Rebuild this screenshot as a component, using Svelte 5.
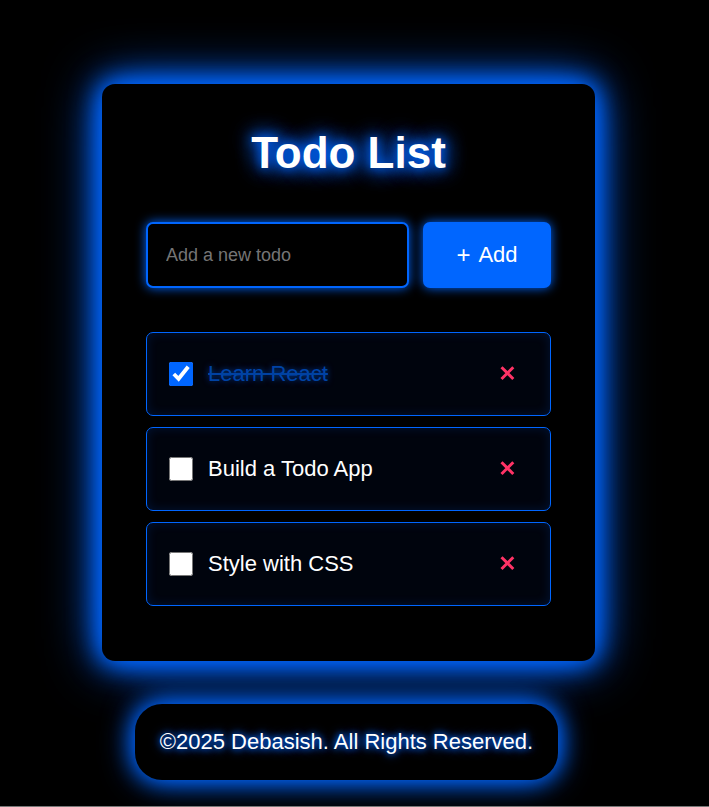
<script>
  let todos = $state([
    { id: 1, text: 'Learn React', done: true },
    { id: 2, text: 'Build a Todo App', done: false },
    { id: 3, text: 'Style with CSS', done: false }
  ]);
  let draft = $state('');

  function add(event) {
    event.preventDefault();
    const text = draft.trim();
    if (!text) return;
    todos.push({ id: Date.now(), text, done: false });
    draft = '';
  }

  function remove(id) {
    todos = todos.filter((todo) => todo.id !== id);
  }
</script>

<div class="page">
  <main class="card">
    <h1>Todo List</h1>
    <form onsubmit={add}>
      <input class="draft" type="text" placeholder="Add a new todo" aria-label="Add a new todo" bind:value={draft} />
      <button class="add" type="submit"><span class="plus">+</span> <span>Add</span></button>
    </form>
    <ul>
      {#each todos as todo (todo.id)}
        <li>
          <label>
            <input class="tick" type="checkbox" bind:checked={todo.done} />
            <span class:done={todo.done}>{todo.text}</span>
          </label>
          <button class="remove" type="button" aria-label="Delete {todo.text}" onclick={() => remove(todo.id)}>
            <svg viewBox="0 0 16 16" width="16" height="16" aria-hidden="true">
              <path d="M1.5 1.2 L13.3 13 M13.3 1.2 L1.5 13" />
            </svg>
          </button>
        </li>
      {/each}
    </ul>
  </main>
  <footer>©2025 Debasish. All Rights Reserved.</footer>
</div>

<style>
  :global(body) {
    margin: 0;
    background: #000;
  }

  .page {
    box-sizing: border-box;
    min-height: 100vh;
    padding: 84px 12px 26px 0;
    display: flex;
    flex-direction: column;
    align-items: center;
    background: #000;
    color: #fff;
    border-bottom: 1px solid #777;
    font-family: 'Liberation Sans', Arial, sans-serif;
    font-size: 22px;
    overflow: hidden;
  }

  .card {
    box-sizing: border-box;
    width: calc(100% - 44px);
    max-width: 493px;
    padding: 44px 44px 55px;
    border-radius: 13px;
    background: #000;
    box-shadow: 0 0 22px #06f, 0 0 33px #06f, 0 0 55px #06f;
  }

  h1 {
    margin: 0 0 44px;
    font-size: 44px;
    line-height: 50px;
    text-align: center;
    text-shadow: 0 0 11px #06f, 0 0 22px #06f, 0 0 22px #06f;
  }

  form {
    display: flex;
    gap: 14px;
    margin-bottom: 44px;
  }

  .draft {
    box-sizing: border-box;
    flex: 1;
    min-width: 0;
    height: 66px;
    padding: 0 18px;
    border: 2px solid #06f;
    border-radius: 7px;
    outline: none;
    background: #000;
    color: #fff;
    font: inherit;
    font-size: 18px;
    box-shadow: 0 0 11px #06f;
  }

  .draft::placeholder {
    color: #757575;
  }

  .add {
    flex: none;
    display: flex;
    align-items: center;
    justify-content: center;
    gap: 8px;
    width: 128px;
    padding: 0;
    border: 0;
    border-radius: 7px;
    background: #06f;
    color: #fff;
    font: inherit;
    cursor: pointer;
    box-shadow: 0 0 11px #06f;
  }

  .plus {
    font-size: 24px;
  }

  ul {
    display: flex;
    flex-direction: column;
    gap: 11px;
    margin: 0;
    padding: 0;
    list-style: none;
  }

  li {
    box-sizing: border-box;
    min-height: 84px;
    padding: 0 22px;
    display: flex;
    align-items: center;
    justify-content: space-between;
    border: 1px solid #06f;
    border-radius: 7px;
    background: #00040d;
    box-shadow: inset 0 0 11px rgba(0, 102, 255, 0.16);
  }

  label {
    display: flex;
    align-items: center;
    gap: 15px;
  }

  .tick {
    width: 24px;
    height: 24px;
    margin: 0;
    accent-color: #06f;
  }

  .done {
    color: #0042a2;
    text-decoration: line-through;
    text-shadow: 0 0 6px rgba(0, 102, 255, 0.5);
  }

  .remove {
    display: flex;
    padding: 12px;
    border: 0;
    background: none;
    cursor: pointer;
  }

  .remove path {
    fill: none;
    stroke: #ff3366;
    stroke-width: 3;
  }

  footer {
    margin: 43px 4px 0 0;
    padding: 25px;
    line-height: 26px;
    border-radius: 27px;
    background: #000;
    text-shadow: 0 0 6px #06f, 0 0 11px #06f;
    box-shadow: 0 0 22px #06f, 0 0 33px #06f;
  }
</style>
